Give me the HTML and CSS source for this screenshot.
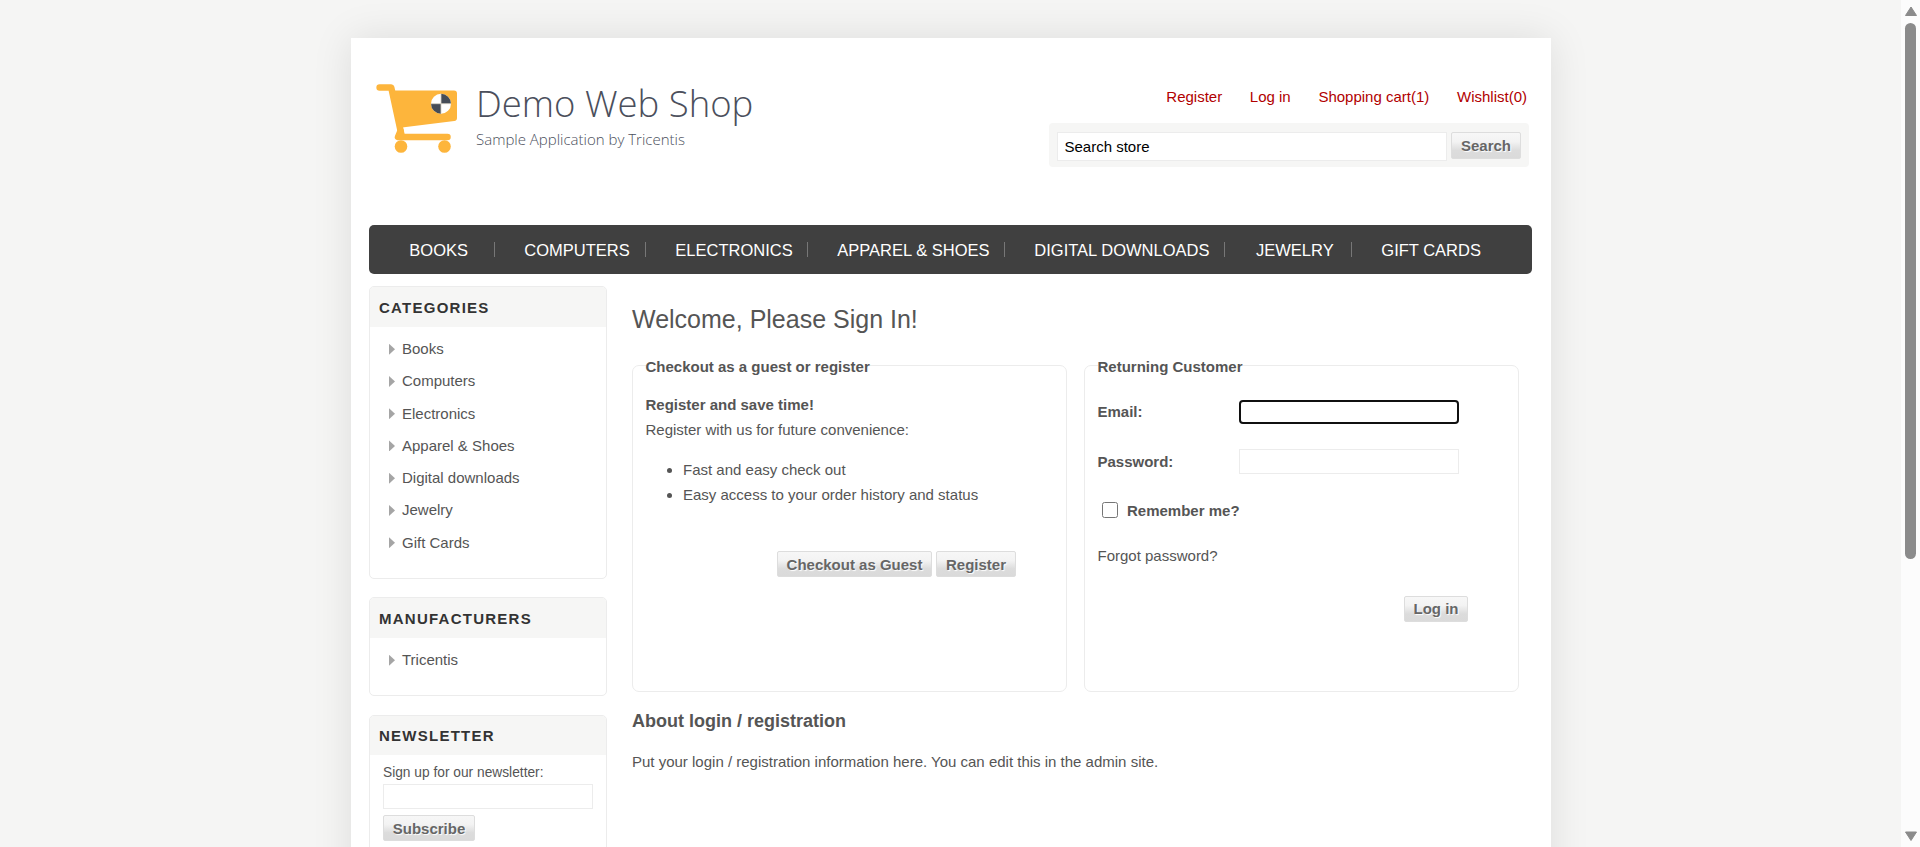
FILE: index.html
```html
<!DOCTYPE html>
<html lang="en">
<head>
<meta charset="utf-8">
<title>Demo Web Shop. Login</title>
<link rel="stylesheet" href="styles.css">
</head>
<body>
<div class="viewport">
  <div class="page">
    <header class="header">
      <a class="logo">
        <svg class="cart" width="82" height="70" viewBox="0 0 82 70">
          <path d="M3.600 3.400H15.200L25.500 51" fill="none" stroke="#fdb53c" stroke-width="6.500" stroke-linecap="round" stroke-linejoin="round"/>
          <path d="M15.500 6.500H78a3 3 0 0 1 3 3V34a3 3 0 0 1-2.700 3L26 43.500z" fill="#fdb53c"/>
          <path d="M24.500 47L22 53H71.500" fill="none" stroke="#fdb53c" stroke-width="6.500" stroke-linecap="round" stroke-linejoin="round"/>
          <circle cx="25" cy="62.500" r="6.300" fill="#fdb53c"/>
          <circle cx="68.500" cy="62.500" r="6.300" fill="#fdb53c"/>
          <circle cx="65" cy="19.700" r="10" fill="#fff"/>
          <path d="M65 19.700V9.700a10 10 0 0 1 10 10zM65 19.700v10a10 10 0 0 1-10-10z" fill="#454c57"/>
          <path d="M65 9.700v20M55 19.700h20" stroke="#d6cfc2" stroke-width=".8"/>
        </svg>
        <span class="logo-text"><span class="logo-name">Demo Web Shop</span><span class="logo-sub">Sample Application by Tricentis</span></span>
      </a>
      <div class="header-right">
        <nav class="header-links"><a>Register</a><a>Log in</a><a>Shopping cart(1)</a><a>Wishlist(0)</a></nav>
        <div class="search-box"><input class="search-input" type="text" value="Search store"><button class="button search-button">Search</button></div>
      </div>
    </header>
    <ul class="menu">
      <li class="menu-books">Books</li><li class="menu-computers">Computers</li><li class="menu-electronics">Electronics</li><li class="menu-apparel">Apparel &amp; Shoes</li><li class="menu-digital">Digital downloads</li><li class="menu-jewelry">Jewelry</li><li class="menu-gift">Gift Cards</li>
    </ul>
    <div class="columns">
      <aside class="sidebar">
        <section class="block categories">
          <h3>Categories</h3>
          <ul class="links"><li>Books</li><li>Computers</li><li>Electronics</li><li>Apparel &amp; Shoes</li><li>Digital downloads</li><li>Jewelry</li><li>Gift Cards</li></ul>
        </section>
        <section class="block manufacturers">
          <h3>Manufacturers</h3>
          <ul class="links"><li>Tricentis</li></ul>
        </section>
        <section class="block newsletter">
          <h3>Newsletter</h3>
          <div class="newsletter-body">
            <span class="newsletter-label">Sign up for our newsletter:</span>
            <input class="field" type="text">
            <button class="button">Subscribe</button>
          </div>
        </section>
      </aside>
      <main class="main">
        <h1>Welcome, Please Sign In!</h1>
        <div class="panels">
          <fieldset class="panel guest">
            <legend>Checkout as a guest or register</legend>
            <p class="pitch"><strong>Register and save time!</strong><br>Register with us for future convenience:</p>
            <ul class="benefits"><li>Fast and easy check out</li><li>Easy access to your order history and status</li></ul>
            <div class="buttons"><button class="button guest-button">Checkout as Guest</button><button class="button register-button">Register</button></div>
          </fieldset>
          <fieldset class="panel returning">
            <legend>Returning Customer</legend>
            <div class="row email-row"><label>Email:</label><input class="field focused" type="text"></div>
            <div class="row"><label>Password:</label><input class="field" type="password"></div>
            <div class="remember"><input type="checkbox"><label>Remember me?</label></div>
            <a class="forgot">Forgot password?</a>
            <div class="buttons"><button class="button login-button">Log in</button></div>
          </fieldset>
        </div>
        <h2>About login / registration</h2>
        <p class="about">Put your login / registration information here. You can edit this in the admin site.</p>
      </main>
    </div>
  </div>
</div>
<div class="scrollbar">
  <svg width="14" height="11" viewBox="0 0 14 11"><path d="M7 1 12.500 9.500H1.500z" fill="#8b8b8b" stroke="#8b8b8b" stroke-linejoin="round"/></svg>
  <div class="thumb"></div>
  <svg class="down" width="14" height="11" viewBox="0 0 14 11"><path d="M7 9.500 12.500 1H1.500z" fill="#8b8b8b" stroke="#8b8b8b" stroke-linejoin="round"/></svg>
</div>
</body>
</html>
```
FILE: styles.css
```css
* { box-sizing: border-box; }
body {
  margin: 0;
  height: 847px;
  display: flex;
  overflow: hidden;
  background: #f5f5f4;
  color: #555;
  font: 15px/25px "Liberation Sans", Arial, sans-serif;
}
ul, h1, h2, h3, p { margin: 0; padding: 0; list-style: none; }
input, button { font-family: inherit; margin: 0; }

.viewport { flex: 1; overflow: hidden; }
.page {
  width: 1200px;
  height: 1200px;
  margin: 38px 0 0 351px;
  padding: 0 19px 0 18px;
  background: #fff;
  box-shadow: 0 0 38px rgba(0, 0, 0, .1);
}

.header { display: flex; justify-content: space-between; height: 187px; }
.logo { display: flex; padding: 46px 0 0 7px; }
.logo-text { display: flex; flex-direction: column; padding: 0 0 0 18px; margin-top: -1px; font-family: "Open Sans", sans-serif; white-space: nowrap; }
.logo-name { font-size: 36.5px; font-weight: 300; line-height: 40px; color: #4b4f5c; }
.logo-sub { font-size: 15px; line-height: 20px; font-weight: 300; color: #4b4f5c; margin-top: 6px; }

.header-right { width: 480px; margin-right: 3px; padding-top: 46px; }
.header-links { display: flex; justify-content: flex-end; gap: 27.7px; padding-right: 2px; color: #b10000; }
.search-box { display: flex; gap: 4px; height: 44px; margin-top: 14px; padding: 9px 8px; border-radius: 4px; background: #f6f6f5; }
.search-input { width: 390px; height: 29px; padding: 0 6.5px; border: 1px solid #ececec; background: #fff; color: #000; font-size: 15px; }

.button {
  height: 26px;
  padding: 0;
  border: 1px solid #ddd;
  border-radius: 2px;
  background: linear-gradient(#f7f7f7 0%, #f3f3f3 35%, #dcdcdc 70%, #dadada 100%);
  color: #666;
  font-size: 15px;
  font-weight: bold;
  line-height: 24px;
  text-shadow: 1px 1px 1px #fff;
}
.search-button { width: 70px; height: 27px; }

.menu {
  display: flex;
  align-items: center;
  height: 49px;
  padding-left: 11px;
  border-radius: 5px;
  background: #404040;
  color: #fff;
  font-size: 16.5px;
  text-transform: uppercase;
}
.menu li { height: 15px; padding-left: 29.3px; line-height: 17px; white-space: nowrap; border-right: 1px solid #777; }
.menu-books { width: 115px; }
.menu-computers { width: 151px; }
.menu-electronics { width: 162px; }
.menu-apparel { width: 197px; }
.menu-digital { width: 220px; }
.menu .menu-jewelry { width: 127px; padding-left: 31px; }
.menu .menu-gift { border: 0; }

.columns { display: flex; gap: 25px; padding-top: 12px; }
.sidebar { width: 238px; display: flex; flex-direction: column; }
.block { border: 1px solid #ececec; border-radius: 5px; overflow: hidden; margin-bottom: 18px; }
.block h3 { height: 40px; padding-left: 9px; background: #f6f6f5; color: #333; font-size: 15px; line-height: 41px; letter-spacing: 1.25px; text-transform: uppercase; }
.links { padding: 6px 0 0 19px; }
.links li { display: flex; align-items: center; height: 32.25px; line-height: 32px; }
.links li::before { content: ""; width: 6px; height: 11px; margin-right: 7px; background: #a5a5a5; clip-path: polygon(0 0, 100% 50%, 0 100%); }
.categories { height: 293px; }
.manufacturers { height: 99px; margin-bottom: 19px; }
.newsletter { height: 180px; }
.newsletter h3 { height: 39px; line-height: 40px; }
.newsletter-body { display: flex; flex-direction: column; align-items: flex-start; padding: 6px 13px; }
.newsletter-label { font-size: 13.75px; line-height: 24px; height: 23px; }
.field { height: 25px; padding: 0 4px; border: 1px solid #ececec; background: #fff; }
.newsletter-body .field { width: 210px; margin-bottom: 6px; }
.newsletter-body .button { width: 92px; padding-top: 1px; }

.main { padding-top: 17px; }
h1 { font-size: 25px; font-weight: normal; line-height: 32px; }
.panels { display: flex; gap: 17px; margin-top: 21px; }
.panel { width: 435px; height: 336px; margin: 0; padding: 0 12px 0 12.5px; border: 1px solid #ececec; border-radius: 7px; }
.panel legend { padding: 2px 0 0; font-weight: bold; line-height: 17px; }
.pitch { padding-top: 17px; }
.benefits { padding: 15px 0 0 37.5px; }
.benefits li { list-style: disc; }
.buttons { display: flex; justify-content: flex-end; gap: 4px; }
.guest .buttons { margin-top: 44px; padding-right: 38px; }
.guest .button { padding-top: 1px; }
.guest-button { width: 155px; }
.register-button { width: 80px; }
.row { display: flex; align-items: center; height: 50px; }
.email-row { margin-top: 11px; }
.row label { width: 141.5px; font-weight: bold; }
.row .field { width: 220px; }
.row .focused { height: 24px; margin-top: 2px; border: 2px solid #101010; border-radius: 4px; outline: 0; }
.remember { display: flex; align-items: center; gap: 9px; height: 48px; padding-left: 4.5px; font-weight: bold; }
.remember input { width: 16px; height: 16px; }
.forgot { display: block; margin-top: 9px; }
.returning .buttons { margin-top: 28px; padding-right: 38px; }
.login-button { width: 64px; }
h2 { margin-top: 16px; font-size: 18px; line-height: 26px; }
.about { margin-top: 15px; }

.scrollbar { width: 19px; display: flex; flex-direction: column; align-items: center; background: #fcfcfc; padding: 6px 0 5px; }
.thumb { width: 11px; height: 536px; margin-top: 6px; border-radius: 6px; background: #8b8b8b; }
.down { margin-top: auto; }
```
